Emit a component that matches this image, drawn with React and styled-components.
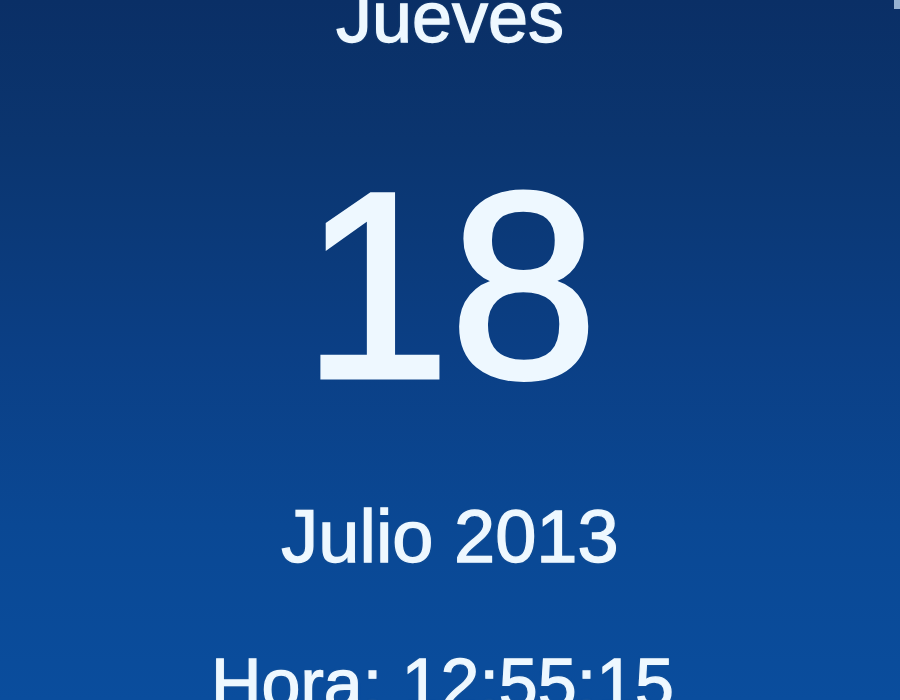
import styled, { createGlobalStyle } from 'styled-components';

const GlobalStyle = createGlobalStyle`
    html, body{
        margin: 0;
        padding: 0;
    }
    body{
        font-family: "Liberation Sans", Arial, sans-serif;
    }
`

const Gadget = styled.div`
    position: relative;
    width: 900px;
    height: 700px;
    overflow: hidden;
    display: flex;
    flex-direction: column;
    align-items: center;
    background: linear-gradient(180deg, #0a2f66 0%, #0b356f 20%, #0b3f85 50%, #0a4894 75%, #0a4d9d 100%);
    color: #eef8ff;
    text-shadow: 0 0 3px rgba(150, 210, 255, 0.35), 0 0 2px rgba(0, 20, 60, 0.7);
`

const Line = styled.div`
    font-size: ${({ size }) => size}px;
    line-height: 1;
    margin-top: ${({ gap }) => gap}px;
    margin-right: ${({ shift }) => shift || 0}px;
    white-space: nowrap;
    text-align: center;
    -webkit-text-stroke: 0.018em currentColor;
`

const CornerMark = styled.span`
    position: absolute;
    top: 0;
    right: 0;
    width: 6px;
    height: 9px;
    background: #b9d3ee;
    opacity: 0.8;
`

export default function App(){
    const day = 'Jueves';
    const date = 18;
    const month = 'Julio 2013';
    const time = '12:55:15';

    return(
        <>
            <GlobalStyle />
            <Gadget>
                <CornerMark />
                <Line size={72} gap={-19}>{day}</Line>
                <Line size={265} gap={100}>{date}</Line>
                <Line size={74} gap={82}>{month}</Line>
                <Line size={70} gap={75} shift={15}>Hora: {time}</Line>
            </Gadget>
        </>
    )
}
